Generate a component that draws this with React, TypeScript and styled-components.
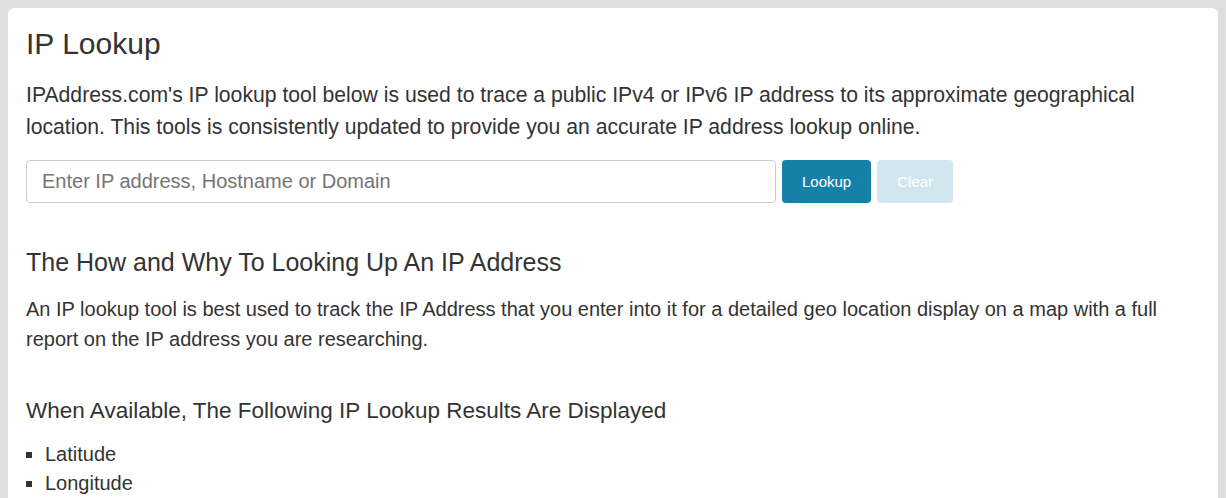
import { FC } from 'react';
import styled, { createGlobalStyle } from 'styled-components';

const GlobalStyle = createGlobalStyle`
    html, body {
        margin: 0;
        padding: 0;
        background: #dedede;
        font-family: "Liberation Sans", Arial, sans-serif;
        color: #333;
    }
    body {
        padding: 8px 8px 0 8px;
    }
`

const results = ['Latitude', 'Longitude']

const App: FC = () => {
    return (
        <>
            <GlobalStyle />
            <Card>
                <PageTitle>IP Lookup</PageTitle>
                <Lead>
                    IPAddress.com's IP lookup tool below is used to trace a public IPv4 or IPv6 IP address to its approximate geographical
                    location. This tools is consistently updated to provide you an accurate IP address lookup online.
                </Lead>
                <SearchForm onSubmit={(e) => e.preventDefault()}>
                    <SearchInput type="text" placeholder="Enter IP address, Hostname or Domain" />
                    <Button type="submit">Lookup</Button>
                    <Button type="button" variant="light" disabled>Clear</Button>
                </SearchForm>
                <SectionTitle>The How and Why To Looking Up An IP Address</SectionTitle>
                <Text>
                    An IP lookup tool is best used to track the IP Address that you enter into it for a detailed geo location display on a map with a full
                    report on the IP address you are researching.
                </Text>
                <SubTitle>When Available, The Following IP Lookup Results Are Displayed</SubTitle>
                <List>
                    {results.map((item) => (
                        <Item key={item}>{item}</Item>
                    ))}
                </List>
            </Card>
        </>
    )
}

export default App

const Card = styled.main`
    background: #fff;
    border-radius: 6px 6px 0 0;
    padding: 18px 18px 40px 18px;
    min-height: 520px;
    box-sizing: border-box;
`

const PageTitle = styled.h1`
    font-size: 30px;
    font-weight: 400;
    line-height: 36px;
    margin: 0 0 17px 0;
`

const Lead = styled.p`
    font-size: 21.2px;
    line-height: 32px;
    margin: 0 0 17px 0;
`

const SearchForm = styled.form`
    display: flex;
    align-items: stretch;
    gap: 6px;
    margin-bottom: 44px;
`

const SearchInput = styled.input`
    width: 750px;
    height: 43px;
    box-sizing: border-box;
    border: 1px solid #ccc;
    border-radius: 4px;
    padding: 6px 15px;
    font-family: inherit;
    font-size: 20px;
    color: #555;
    outline: none;
    &::placeholder {
        color: #757575;
    }
`

const Button = styled.button<{ variant?: 'light' }>`
    height: 43px;
    box-sizing: border-box;
    padding: 0 20px;
    border: none;
    border-radius: 4px;
    font-family: inherit;
    font-size: 15px;
    color: #fff;
    background: ${({ variant }) => (variant === 'light' ? '#d1e6ee' : '#1581a8')};
    cursor: ${({ variant }) => (variant === 'light' ? 'default' : 'pointer')};
`

const SectionTitle = styled.h2`
    font-size: 25px;
    font-weight: 400;
    line-height: 30px;
    margin: 0 0 17px 0;
`

const SubTitle = styled.h3`
    font-size: 22.5px;
    font-weight: 400;
    line-height: 27px;
    margin: 0 0 16px 0;
`

const Text = styled.p`
    font-size: 20px;
    line-height: 30px;
    margin: 0 0 43px 0;
`

const List = styled.ul`
    margin: 0;
    padding: 0 0 0 19px;
    list-style: square;
`

const Item = styled.li`
    font-size: 20px;
    line-height: 29px;
`
